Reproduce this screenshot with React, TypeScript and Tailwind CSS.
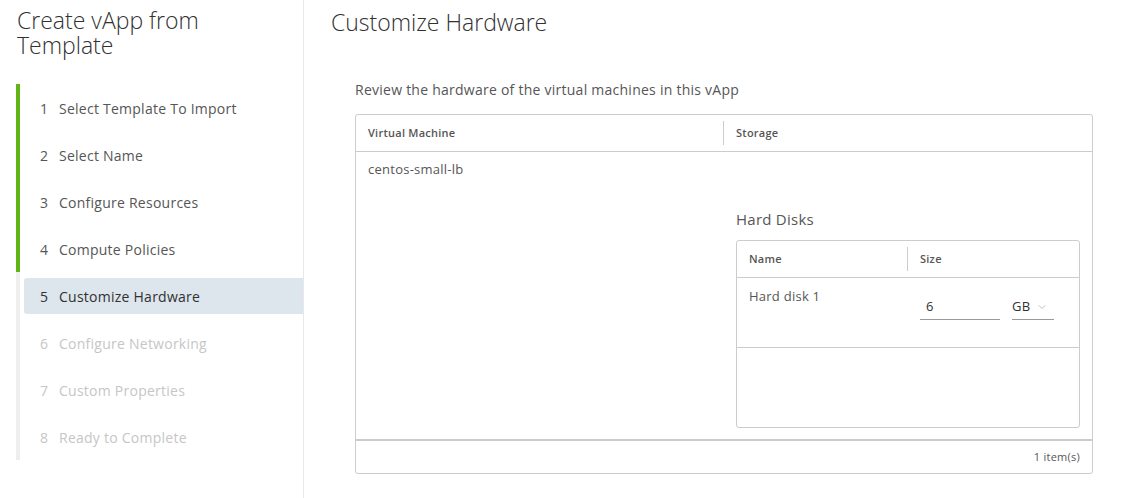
import { ChevronDown } from "lucide-react";

const steps = [
  { n: 1, label: "Select Template To Import", state: "done" },
  { n: 2, label: "Select Name", state: "done" },
  { n: 3, label: "Configure Resources", state: "done" },
  { n: 4, label: "Compute Policies", state: "done" },
  { n: 5, label: "Customize Hardware", state: "current" },
  { n: 6, label: "Configure Networking", state: "todo" },
  { n: 7, label: "Custom Properties", state: "todo" },
  { n: 8, label: "Ready to Complete", state: "todo" },
];

export default function App() {
  return (
    <div
      className="flex h-[498px] w-[1124px] bg-white text-[#565656] tracking-[0.25px]"
      style={{ fontFamily: "'Open Sans', Lato, sans-serif" }}
    >
      {/* Navegación del asistente */}
      <div className="w-[304px] shrink-0 border-r border-[#e8e8e8]">
        <h1 className="pl-[17px] pt-[8px] text-[23px] font-light leading-[25px] tracking-normal text-[#313131]">
          Create vApp from
          <br />
          Template
        </h1>
        <ul className="mt-[26px] ml-4">
          {steps.map((s) => (
            <li
              key={s.n}
              className={
                "h-[47px] border-l-4 pt-[6px] pb-[5px] " +
                (s.state === "done" ? "border-[#60b515]" : "border-[#eeeeee]")
              }
            >
              <div
                className={
                  "ml-1 flex h-9 items-center rounded-l-[3px] pl-4 text-[14px] " +
                  (s.state === "current"
                    ? "bg-[#dde5ed] text-[#313131]"
                    : s.state === "done"
                    ? "text-[#565656]"
                    : "text-[#c6c6c6]")
                }
              >
                <span className="w-[19px]">{s.n}</span>
                <span>{s.label}</span>
              </div>
            </li>
          ))}
        </ul>
      </div>

      {/* Contenido */}
      <div className="flex-1 pl-[27px]">
        <h2 className="pt-[8px] text-[23px] font-light leading-[28px] tracking-normal text-[#313131]">
          Customize Hardware
        </h2>
        <div className="pl-6 pr-[31px]">
          <p className="mt-[44px] text-[14px] leading-[20px] text-[#565656]">
            Review the hardware of the virtual machines in this vApp
          </p>
          <div className="mt-[14px] rounded-[3px] border border-[#cccccc]">
            <div className="flex h-[37px] items-center border-b border-[#cccccc] text-[11px] font-semibold text-[#565656]">
              <div className="flex h-6 w-[368px] items-center border-r border-[#cccccc] pl-3">
                Virtual Machine
              </div>
              <div className="pl-3">Storage</div>
            </div>
            <div className="flex h-[287px] text-[13px]">
              <div className="w-[368px] pl-3 pt-[8px]">centos-small-lb</div>
              <div className="flex-1 pl-3 pr-3">
                <div className="mt-[57px] text-[15px] leading-[20px] text-[#565656]">Hard Disks</div>
                <div className="mt-[11px] h-[188px] rounded-[3px] border border-[#cccccc]">
                  <div className="flex h-[37px] items-center border-b border-[#cccccc] text-[11px] font-semibold text-[#565656]">
                    <div className="flex h-6 w-[171px] items-center border-r border-[#cccccc] pl-3">
                      Name
                    </div>
                    <div className="pl-3">Size</div>
                  </div>
                  <div className="flex h-[70px] border-b border-[#cccccc]">
                    <div className="w-[171px] pl-3 pt-[9px]">Hard disk 1</div>
                    <div className="flex items-start gap-3 pl-3 pt-[19px]">
                      <div className="w-[80px] border-b border-[#9a9a9a] pb-[2px] pl-[6px] text-[13px] text-[#313131]">
                        6
                      </div>
                      <div className="flex w-[42px] items-center gap-[6px] border-b border-[#9a9a9a] pb-[2px] text-[13px] text-[#313131]">
                        GB
                        <ChevronDown size={12} strokeWidth={1.25} className="text-[#9a9a9a]" />
                      </div>
                    </div>
                  </div>
                </div>
              </div>
            </div>
            <div className="flex h-[34px] items-center justify-end border-t-2 border-[#cccccc] pr-3 text-[11px] text-[#565656]">
              1 item(s)
            </div>
          </div>
        </div>
      </div>
    </div>
  );
}
